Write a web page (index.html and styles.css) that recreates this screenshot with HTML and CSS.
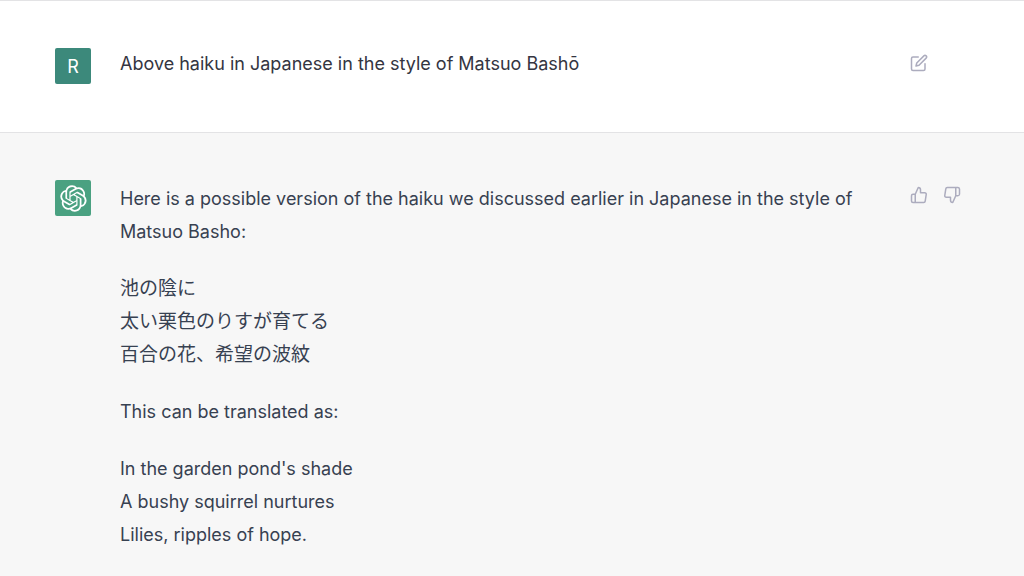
FILE: index.html
```html
<!doctype html>
<html lang="en">

<head>
  <meta charset="utf-8">
  <meta name="viewport" content="width=device-width, initial-scale=1">
  <title>Chat</title>
  <link rel="stylesheet" href="styles.css">
</head>

<body>
  <main class="chat">
    <section class="message user">
      <div class="avatar">R</div>
      <div class="text">
        <p>Above haiku in Japanese in the style of Matsuo Bashō</p>
      </div>
      <div class="actions">
        <button type="button" aria-label="Edit">
          <svg viewBox="0 0 24 24"><path d="M11 4H4a2 2 0 0 0-2 2v14a2 2 0 0 0 2 2h14a2 2 0 0 0 2-2v-7"/><path d="M18.500 2.500a2.121 2.121 0 0 1 3 3L12 15l-4 1 1-4 9.500-9.500z"/></svg>
        </button>
      </div>
    </section>

    <section class="message assistant">
      <div class="avatar">
        <svg viewBox="0 0 41 41" aria-hidden="true"><path d="M37.532 16.871a9.963 9.963 0 0 0-.856-8.184 10.078 10.078 0 0 0-10.855-4.835A9.964 9.964 0 0 0 18.306.5a10.079 10.079 0 0 0-9.614 6.977 9.967 9.967 0 0 0-6.664 4.834 10.080 10.080 0 0 0 1.240 11.817 9.965 9.965 0 0 0 .856 8.185 10.079 10.079 0 0 0 10.855 4.835 9.965 9.965 0 0 0 7.516 3.350 10.078 10.078 0 0 0 9.617-6.981 9.967 9.967 0 0 0 6.663-4.834 10.079 10.079 0 0 0-1.243-11.812zM22.498 37.886a7.474 7.474 0 0 1-4.799-1.735c.061-.033.168-.091.237-.134l7.964-4.600a1.294 1.294 0 0 0 .655-1.134V19.054l3.366 1.944a.12.12 0 0 1 .066.092v9.299a7.505 7.505 0 0 1-7.490 7.496zM6.392 31.006a7.471 7.471 0 0 1-.894-5.023c.060.036.162.099.237.141l7.964 4.600a1.297 1.297 0 0 0 1.308 0l9.724-5.614v3.888a.12.12 0 0 1-.048.103l-8.051 4.649a7.504 7.504 0 0 1-10.240-2.744zM4.297 13.620A7.469 7.469 0 0 1 8.200 10.333c0 .068-.004.190-.004.274v9.201a1.294 1.294 0 0 0 .654 1.132l9.723 5.614-3.366 1.944a.12.12 0 0 1-.114.010L7.040 23.856a7.504 7.504 0 0 1-2.743-10.237zm27.658 6.437-9.724-5.615 3.367-1.943a.121.121 0 0 1 .113-.010l8.052 4.648a7.498 7.498 0 0 1-1.158 13.528v-9.476a1.293 1.293 0 0 0-.650-1.132zm3.350-5.043c-.059-.037-.162-.099-.236-.141l-7.965-4.600a1.298 1.298 0 0 0-1.308 0l-9.723 5.614v-3.888a.12.12 0 0 1 .048-.103l8.050-4.645a7.497 7.497 0 0 1 11.135 7.763zm-21.063 6.929-3.367-1.944a.12.12 0 0 1-.065-.092v-9.299a7.497 7.497 0 0 1 12.293-5.756 6.940 6.940 0 0 0-.236.134l-7.965 4.600a1.294 1.294 0 0 0-.654 1.132l-.006 11.225zm1.829-3.943 4.330-2.501 4.332 2.500v4.999l-4.331 2.500-4.331-2.500V18z"/></svg>
      </div>
      <div class="text">
        <p>Here is a possible version of the haiku we discussed earlier in Japanese in the style of Matsuo Basho:</p>
        <p lang="ja">池の陰に<br>太い栗色のりすが育てる<br>百合の花、希望の波紋</p>
        <p>This can be translated as:</p>
        <p>In the garden pond's shade<br>A bushy squirrel nurtures<br>Lilies, ripples of hope.</p>
      </div>
      <div class="actions">
        <button type="button" aria-label="Good response">
          <svg viewBox="0 0 24 24"><path d="M14 9V5a3 3 0 0 0-3-3l-4 9v11h11.280a2 2 0 0 0 2-1.700l1.380-9a2 2 0 0 0-2-2.300zM7 22H4a2 2 0 0 1-2-2v-7a2 2 0 0 1 2-2h3"/></svg>
        </button>
        <button type="button" aria-label="Bad response">
          <svg viewBox="0 0 24 24"><path d="M10 15v4a3 3 0 0 0 3 3l4-9V2H5.720a2 2 0 0 0-2 1.700l-1.380 9a2 2 0 0 0 2 2.300zm7-13h2.670A2.310 2.310 0 0 1 22 4v7a2.310 2.310 0 0 1-2.330 2H17"/></svg>
        </button>
      </div>
    </section>
  </main>
</body>

</html>
```
FILE: styles.css
```css
* {
  box-sizing: border-box;
}

body {
  margin: 0;
  background-color: #f7f7f7;
  font-family: Inter, "Noto Sans CJK JP", sans-serif;
  font-size: 18px;
  line-height: 33px;
  color: #374151;
}

.message {
  display: flex;
  align-items: flex-start;
  padding: 47px 54px 48px 55px;
  border-top: 1px solid #e3e3e5;
}

.user {
  background-color: #fff;
  color: #343541;
  line-height: 31px;
}

.assistant {
  background-color: #f7f7f7;
}

.avatar {
  display: flex;
  flex: none;
  align-items: center;
  justify-content: center;
  width: 36px;
  height: 36px;
  margin-right: 29px;
  border-radius: 2px;
  background-color: #3c897b;
  color: #fff;
}

.assistant .avatar {
  background-color: #4aa181;
}

.avatar svg {
  width: 27px;
  height: 27px;
  fill: #fff;
}

.text {
  flex: 1;
}

.assistant .text {
  padding-top: 2px;
}

.text p {
  margin: 0 0 24px;
}

.text p:last-child {
  margin-bottom: 0;
}

.text p:lang(ja) {
  font-size: 19px;
}

.actions {
  display: flex;
  flex: none;
  gap: 7px;
  width: 64px;
  margin-left: 48px;
  padding-top: 2px;
}

.actions button {
  display: flex;
  padding: 4px;
  border: 0;
  background: none;
}

.actions svg {
  width: 18px;
  height: 18px;
  fill: none;
  stroke: #acacbe;
  stroke-width: 2;
  stroke-linecap: round;
  stroke-linejoin: round;
}
```
